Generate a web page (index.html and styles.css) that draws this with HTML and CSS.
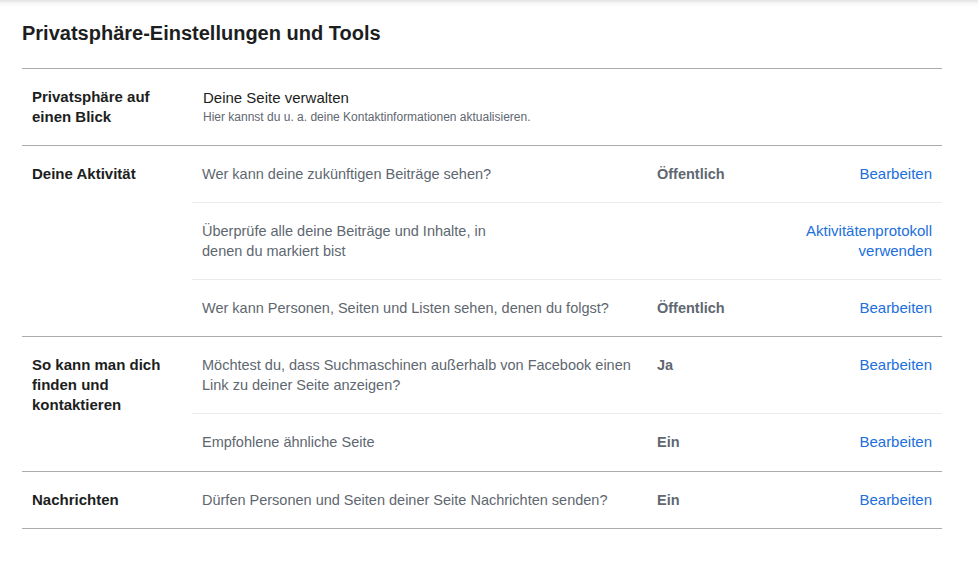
FILE: index.html
```html
<!DOCTYPE html>
<html lang="de">
<head>
<meta charset="utf-8">
<title>Privatsphäre-Einstellungen und Tools</title>
<link rel="stylesheet" href="styles.css">
</head>
<body>
<div class="page">
  <h1 class="title">Privatsphäre-Einstellungen und Tools</h1>
  <div class="table">
    <section class="group">
      <div class="label">Privatsphäre auf einen Blick</div>
      <div class="rows">
        <div class="row">
          <div class="mid intro">
            <div class="intro-main">Deine Seite verwalten</div>
            <div class="intro-sub">Hier kannst du u. a. deine Kontaktinformationen aktualisieren.</div>
          </div>
        </div>
      </div>
    </section>
    <section class="group">
      <div class="label">Deine Aktivität</div>
      <div class="rows">
        <div class="row">
          <div class="mid">Wer kann deine zukünftigen Beiträge sehen?</div>
          <div class="value">Öffentlich</div>
          <a class="link" href="#">Bearbeiten</a>
        </div>
        <div class="row">
          <div class="mid"><span class="narrow">Überprüfe alle deine Beiträge und Inhalte, in denen du markiert bist</span></div>
          <div class="value"></div>
          <a class="link" href="#">Aktivitätenprotokoll verwenden</a>
        </div>
        <div class="row">
          <div class="mid">Wer kann Personen, Seiten und Listen sehen, denen du folgst?</div>
          <div class="value">Öffentlich</div>
          <a class="link" href="#">Bearbeiten</a>
        </div>
      </div>
    </section>
    <section class="group">
      <div class="label">So kann man dich finden und kontaktieren</div>
      <div class="rows">
        <div class="row">
          <div class="mid">Möchtest du, dass Suchmaschinen außerhalb von Facebook einen Link zu deiner Seite anzeigen?</div>
          <div class="value">Ja</div>
          <a class="link" href="#">Bearbeiten</a>
        </div>
        <div class="row row-tall">
          <div class="mid">Empfohlene ähnliche Seite</div>
          <div class="value">Ein</div>
          <a class="link" href="#">Bearbeiten</a>
        </div>
      </div>
    </section>
    <section class="group">
      <div class="label">Nachrichten</div>
      <div class="rows">
        <div class="row">
          <div class="mid">Dürfen Personen und Seiten deiner Seite Nachrichten senden?</div>
          <div class="value">Ein</div>
          <a class="link" href="#">Bearbeiten</a>
        </div>
      </div>
    </section>
  </div>
</div>
</body>
</html>
```

FILE: styles.css
```css
html, body {
  margin: 0;
  padding: 0;
  background: #fff;
}
body {
  font-family: "Liberation Sans", Arial, sans-serif;
  font-size: 14px;
  line-height: 20px;
  color: #1c1e21;
  background: linear-gradient(#e2e2e2, #f6f6f6 3px, #ffffff 7px) no-repeat;
  background-size: 100% 8px;
  min-height: 580px;
}
.page {
  padding: 21px 36px 0 22px;
}
.title {
  margin: 0 0 23px;
  font-size: 20px;
  line-height: 24px;
  font-weight: bold;
  color: #1c1e21;
}
.table {
  border-top: 1px solid #acacac;
}
.group {
  display: grid;
  grid-template-columns: 170px 1fr;
  border-bottom: 1px solid #acacac;
}
.label {
  padding: 18px 10px;
  font-size: 15px;
  font-weight: bold;
  color: #1c1e21;
}
.rows {
  display: flex;
  flex-direction: column;
}
.row {
  display: grid;
  grid-template-columns: 455px 1fr 150px;
  border-bottom: 1px solid #e9ebee;
}
.row:last-child {
  border-bottom: none;
}
.row-tall .mid,
.row-tall .value,
.row-tall .link {
  padding-bottom: 19px;
}
.mid {
  padding: 18px 10px;
  font-size: 14.5px;
  color: #606770;
}
.narrow {
  display: block;
  max-width: 300px;
}
.intro {
  grid-column: 1 / -1;
  padding-left: 11px;
}
.intro-main {
  font-size: 15px;
  color: #1c1e21;
  padding-top: 1px;
  margin-bottom: -1px;
}
.intro-sub {
  font-size: 12px;
  line-height: 20px;
  color: #606770;
}
.value {
  padding: 18px 10px;
  font-size: 14.5px;
  font-weight: bold;
  color: #606770;
}
.link {
  padding: 18px 10px;
  font-size: 15px;
  text-align: right;
  color: #216fdb;
  text-decoration: none;
}
```
